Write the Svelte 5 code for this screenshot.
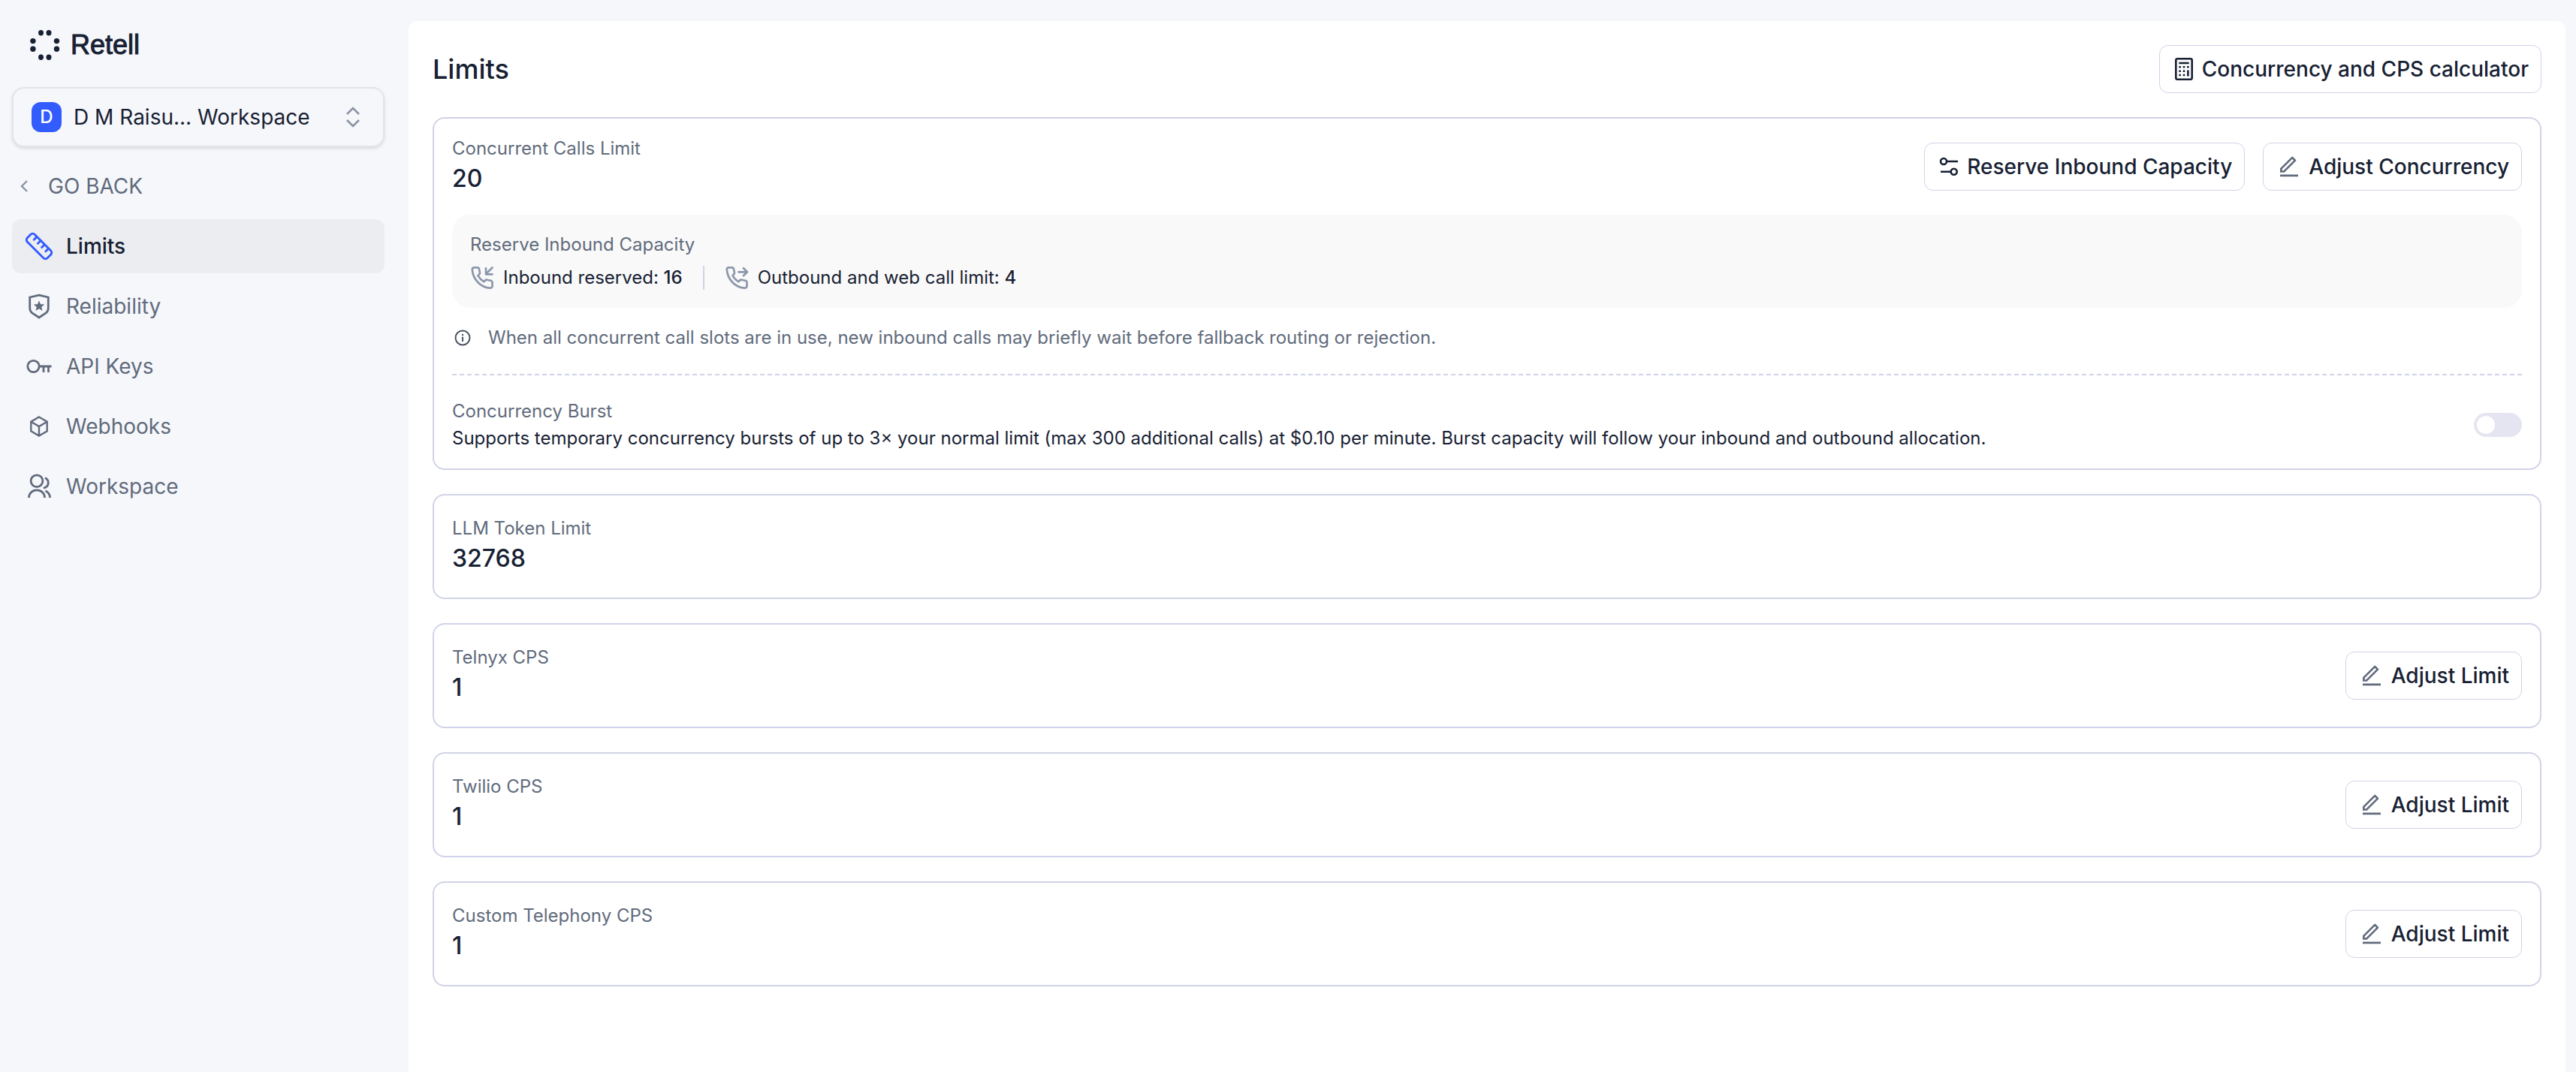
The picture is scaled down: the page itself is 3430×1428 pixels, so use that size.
<script lang="ts">
  const nav = [
    { name: 'Limits', icon: 'ruler', active: true },
    { name: 'Reliability', icon: 'shield', active: false },
    { name: 'API Keys', icon: 'key', active: false },
    { name: 'Webhooks', icon: 'box', active: false },
    { name: 'Workspace', icon: 'group', active: false },
  ];

  const limits = [
    { id: 'llm', label: 'LLM Token Limit', value: '32768', adjustable: false },
    { id: 'telnyx', label: 'Telnyx CPS', value: '1', adjustable: true },
    { id: 'twilio', label: 'Twilio CPS', value: '1', adjustable: true },
    { id: 'custom', label: 'Custom Telephony CPS', value: '1', adjustable: true },
  ];

  let burst = $state(false);
</script>

{#snippet pencil()}
  <svg class="pencil" viewBox="0 0 24 24" fill="currentColor" aria-hidden="true">
    <path d="M6.41 15.89 16.56 5.75l-1.42-1.42L5 14.48v1.41h1.41Zm.83 2H3v-4.24L14.44 2.21a1 1 0 0 1 1.41 0l2.83 2.83a1 1 0 0 1 0 1.41L7.24 17.89ZM3 19.89h18v2H3v-2Z" />
  </svg>
{/snippet}

{#snippet phone(arrow: string)}
  <svg viewBox="0 0 32 32" fill="none" stroke="currentColor" stroke-width="2.7" stroke-linejoin="round" stroke-linecap="round" aria-hidden="true">
    <path d={arrow} />
    <path d="M29.500 23v4a2.700 2.700 0 0 1-2.900 2.700C14 29 3.500 18 2.800 4.900A2.700 2.700 0 0 1 5.500 2.300h3.800a2.700 2.700 0 0 1 2.700 2.300l.9 4.500a2.700 2.700 0 0 1-.8 2.400l-1.700 1.700a21 21 0 0 0 8 8l1.700-1.700a2.700 2.700 0 0 1 2.400-.8l4.500 1a2.700 2.700 0 0 1 2.500 3.300Z" />
  </svg>
{/snippet}

<div class="app">
  <aside class="sidebar">
    <a class="logo" href="#home">
      <svg viewBox="0 0 40 40" fill="currentColor" aria-hidden="true">
        <ellipse cx="14.500" cy="3.700" rx="3.500" ry="3.700" />
        <ellipse cx="25" cy="3.700" rx="3.500" ry="3.700" />
        <ellipse cx="3.900" cy="14.600" rx="3.700" ry="3.700" />
        <ellipse cx="35.500" cy="14.600" rx="3.700" ry="3.700" />
        <ellipse cx="3.900" cy="25.200" rx="3.700" ry="3.700" />
        <ellipse cx="35.500" cy="25.200" rx="3.700" ry="3.700" />
        <ellipse cx="14.500" cy="36.300" rx="3.500" ry="3.700" />
        <ellipse cx="25" cy="36.300" rx="3.500" ry="3.700" />
      </svg>
      <span>Retell</span>
    </a>

    <button class="switcher" type="button">
      <span class="badge">D</span>
      <span class="switcher-name">D M Raisu... Workspace</span>
      <svg viewBox="0 0 32 32" fill="none" stroke="currentColor" stroke-width="2.6" aria-hidden="true">
        <path d="m8 12 8-8 8 8M8 20l8 8 8-8" />
      </svg>
    </button>

    <a class="back" href="#back">
      <svg viewBox="0 0 16 16" fill="none" stroke="currentColor" stroke-width="2.4" aria-hidden="true">
        <path d="M12 1 5 8l7 7" />
      </svg>
      <span>GO BACK</span>
    </a>

    <nav aria-label="Settings">
      {#each nav as item (item.name)}
        <a class="nav-item" class:active={item.active} href={'#' + item.icon}>
          <svg viewBox="0 0 40 40" fill="none" stroke="currentColor" stroke-width="2.8" aria-hidden="true">
            {#if item.icon === 'ruler'}
              <g transform="rotate(45 20 20)" stroke-linecap="round" stroke-linejoin="round" stroke-width="2.9">
                <rect x="1" y="13" width="38" height="14" rx="4" />
                <path d="M9 13.500v5M16.300 13.500v5M23.600 13.500v5M31 13.500v5" />
              </g>
            {:else if item.icon === 'shield'}
              <path d="M20 5.200 32.300 8v14.200c0 3-1.400 5.500-3.800 7.100L20 35l-8.500-5.700a8.600 8.600 0 0 1-3.800-7.100V8Z" />
              <path stroke="none" fill="currentColor" d="m20 12.500 2 4.700 5.200.4-4 3.300 1.300 5-4.500-2.700-4.500 2.700 1.300-5-4-3.300 5.200-.4Z" />
            {:else if item.icon === 'key'}
              <circle cx="12.500" cy="20" r="7.700" />
              <path d="M20 20h16.500M26 20v8M32.500 20v8" />
            {:else if item.icon === 'box'}
              <path stroke-width="2.400" d="m20 7.500 10.700 6.200v12.600L20 32.500 9.300 26.300V13.700ZM9.300 13.700 20 20l10.700-6.300M20 20v12.500" />
            {:else}
              <circle cx="17" cy="12.700" r="7.900" />
              <path d="M6.500 35c0-5.800 4.500-10.200 10.500-10.200S27.500 29.200 27.500 35M28 8.500c6.500 3.500 5.500 12-2 13.700M28.500 25.700c4 2 6 5 6 9.300" />
            {/if}
          </svg>
          <span>{item.name}</span>
        </a>
      {/each}
    </nav>
  </aside>

  <main>
    <header>
      <h1>Limits</h1>
      <button class="btn" type="button">
        <svg viewBox="0 0 32 32" fill="none" stroke="currentColor" stroke-width="2.600" aria-hidden="true">
          <rect x="5.300" y="2.300" width="21.400" height="27.400" rx="2" />
          <path d="M9.300 8h13.400M21.400 17.500v8" />
          <path d="M9.300 13.300h2.600M14.700 13.300h2.600M20.100 13.300h2.600M9.300 18.700h2.600M14.700 18.700h2.600M9.300 24h2.600M14.700 24h2.600" />
        </svg>
        Concurrency and CPS calculator
      </button>
    </header>

    <section class="card first">
      <div class="row">
        <div>
          <div class="label">Concurrent Calls Limit</div>
          <div class="value">20</div>
        </div>
        <div class="actions">
          <button class="btn" type="button">
            <svg viewBox="0 0 32 32" fill="none" stroke="currentColor" stroke-width="2.600" aria-hidden="true">
              <circle cx="9" cy="9" r="4" />
              <circle cx="22.700" cy="22.700" r="4" />
              <path d="M13 9h15M5 22.700h14" />
            </svg>
            Reserve Inbound Capacity
          </button>
          <button class="btn" type="button">{@render pencil()}Adjust Concurrency</button>
        </div>
      </div>

      <div class="reserve">
        <div class="label">Reserve Inbound Capacity</div>
        <div class="stats">
          <div class="stat">
            {@render phone('M29.500 2.500l-8 8M21 3.300v8h8.500')}
            <span>Inbound reserved: <b>16</b></span>
          </div>
          <div class="divider"></div>
          <div class="stat">
            {@render phone('M18.500 8.300H30M25 3.300l5 5-5 5')}
            <span>Outbound and web call limit: <b>4</b></span>
          </div>
        </div>
      </div>

      <p class="note">
        <svg viewBox="0 0 28 28" fill="none" stroke="currentColor" stroke-width="2" aria-hidden="true">
          <circle cx="14" cy="14" r="9.500" />
          <path d="M14 12.800V19M14 9v2.200" />
        </svg>
        When all concurrent call slots are in use, new inbound calls may briefly wait before fallback routing or rejection.
      </p>

      <div class="burst row">
        <div>
          <label class="label" for="burst">Concurrency Burst</label>
          <p class="description">Supports temporary concurrency bursts of up to 3× your normal limit (max 300 additional calls) at $0.10 per minute. Burst capacity will follow your inbound and outbound allocation.</p>
        </div>
        <input id="burst" class="toggle" type="checkbox" role="switch" bind:checked={burst} />
      </div>
    </section>

    {#each limits as limit (limit.id)}
      <section class="card row">
        <div>
          <div class="label">{limit.label}</div>
          <div class="value">{limit.value}</div>
        </div>
        {#if limit.adjustable}
          <button class="btn" type="button">{@render pencil()}Adjust Limit</button>
        {/if}
      </section>
    {/each}
  </main>
</div>

<style>
  :global(body) {
    background: #f6f7fb;
  }

  .app {
    --ink: #172133;
    --muted: #616b7c;
    --line: #d1d3e8;
    box-sizing: border-box;
    display: flex;
    gap: 32px;
    min-height: 100vh;
    padding: 28px 14px 0 16px;
    color: var(--ink);
    font-family: Inter, 'Liberation Sans', sans-serif;
    font-size: 28px;
    line-height: 40px;
  }

  .app :global(*) {
    box-sizing: border-box;
  }

  h1,
  p {
    margin: 0;
  }

  svg {
    flex: none;
    display: block;
    width: 32px;
    height: 32px;
  }

  a {
    color: inherit;
    text-decoration: none;
  }

  button {
    color: inherit;
    font: inherit;
    cursor: pointer;
  }

  .sidebar {
    flex: none;
    width: 496px;
  }

  .logo {
    display: flex;
    align-items: center;
    gap: 14px;
    height: 64px;
    padding-left: 24px;
    font: 36px/40px 'Liberation Sans', sans-serif;
    -webkit-text-stroke: 1px currentColor;
  }

  .logo svg {
    width: 40px;
    height: 40px;
  }

  .switcher {
    display: flex;
    align-items: center;
    gap: 16px;
    width: 100%;
    height: 80px;
    margin-top: 24px;
    padding: 0 24px;
    border: 2px solid #e3e4e6;
    border-radius: 16px;
    background: #f6f7fb;
    box-shadow: 0 2px 4px rgb(20 20 20 / 12%);
    text-align: left;
  }

  .badge {
    display: grid;
    place-items: center;
    width: 40px;
    height: 40px;
    border-radius: 12px;
    background: #335cff;
    color: #fff;
    font-size: 24px;
    font-weight: 500;
  }

  .switcher-name {
    flex: 1;
  }

  .switcher svg {
    color: #8a93a5;
  }

  .back {
    display: flex;
    align-items: center;
    gap: 24px;
    margin-top: 32px;
    padding-left: 8px;
    color: var(--muted);
  }

  .back svg {
    width: 16px;
    height: 16px;
    color: #8a93a5;
  }

  nav {
    display: flex;
    flex-direction: column;
    gap: 8px;
    margin-top: 24px;
  }

  .nav-item {
    display: flex;
    align-items: center;
    gap: 16px;
    height: 72px;
    padding: 0 16px;
    border-radius: 12px;
    color: var(--muted);
  }

  .nav-item svg {
    width: 40px;
    height: 40px;
  }

  .nav-item.active {
    background: #ecedf1;
    color: var(--ink);
    font-weight: 500;
  }

  .nav-item.active svg {
    color: #335cff;
  }

  main {
    display: flex;
    flex: 1;
    flex-direction: column;
    gap: 32px;
    min-width: 0;
    padding: 32px;
    border-radius: 12px 12px 0 0;
    background: #fff;
  }

  header,
  .row {
    display: flex;
    align-items: center;
    justify-content: space-between;
    gap: 24px;
  }

  h1 {
    font-size: 36px;
    font-weight: 500;
    line-height: 48px;
  }

  .btn {
    display: flex;
    flex: none;
    align-items: center;
    gap: 8px;
    height: 64px;
    padding: 0 16px;
    border: 1px solid var(--line);
    border-radius: 12px;
    background: #fff;
    font-weight: 500;
    white-space: nowrap;
  }

  .pencil {
    margin: 0 2px;
    color: var(--muted);
  }

  .card {
    padding: 28px 24px;
    border: 2px solid var(--line);
    border-radius: 16px;
  }

  .card.first {
    padding: 24px;
  }

  .label {
    display: block;
    color: var(--muted);
    font-size: 24px;
    line-height: 32px;
  }

  .value {
    font-size: 32px;
    font-weight: 500;
    line-height: 48px;
  }

  .actions {
    display: flex;
    gap: 24px;
  }

  .reserve {
    margin-top: 24px;
    padding: 24px;
    border-radius: 24px;
    background: #f9f9f9;
  }

  .stats,
  .stat,
  .note {
    display: flex;
    align-items: center;
    font-size: 24px;
    line-height: 32px;
  }

  .stats {
    gap: 27px;
    margin-top: 12px;
  }

  .stat {
    gap: 12px;
  }

  .stat svg {
    color: #8d97ab;
  }

  .stat b {
    font-weight: 500;
  }

  .divider {
    width: 2px;
    height: 32px;
    background: var(--line);
  }

  .note {
    gap: 20px;
    margin-top: 24px;
    color: var(--muted);
  }

  .note svg {
    width: 28px;
    height: 28px;
    color: #4a5364;
  }

  .burst {
    margin-top: 32px;
    padding-top: 32px;
    border-top: 2px dashed var(--line);
  }

  .description {
    margin-top: 4px;
    font-size: 24px;
    line-height: 32px;
  }

  .toggle {
    flex: none;
    width: 64px;
    height: 32px;
    margin: 0;
    padding: 4px;
    border-radius: 16px;
    appearance: none;
    background: #e5e5f1;
    cursor: pointer;
  }

  .toggle::before {
    display: block;
    width: 24px;
    height: 24px;
    border-radius: 50%;
    background: #fff;
    content: '';
  }

  .toggle:checked {
    background: #335cff;
  }

  .toggle:checked::before {
    margin-left: 32px;
  }
</style>
